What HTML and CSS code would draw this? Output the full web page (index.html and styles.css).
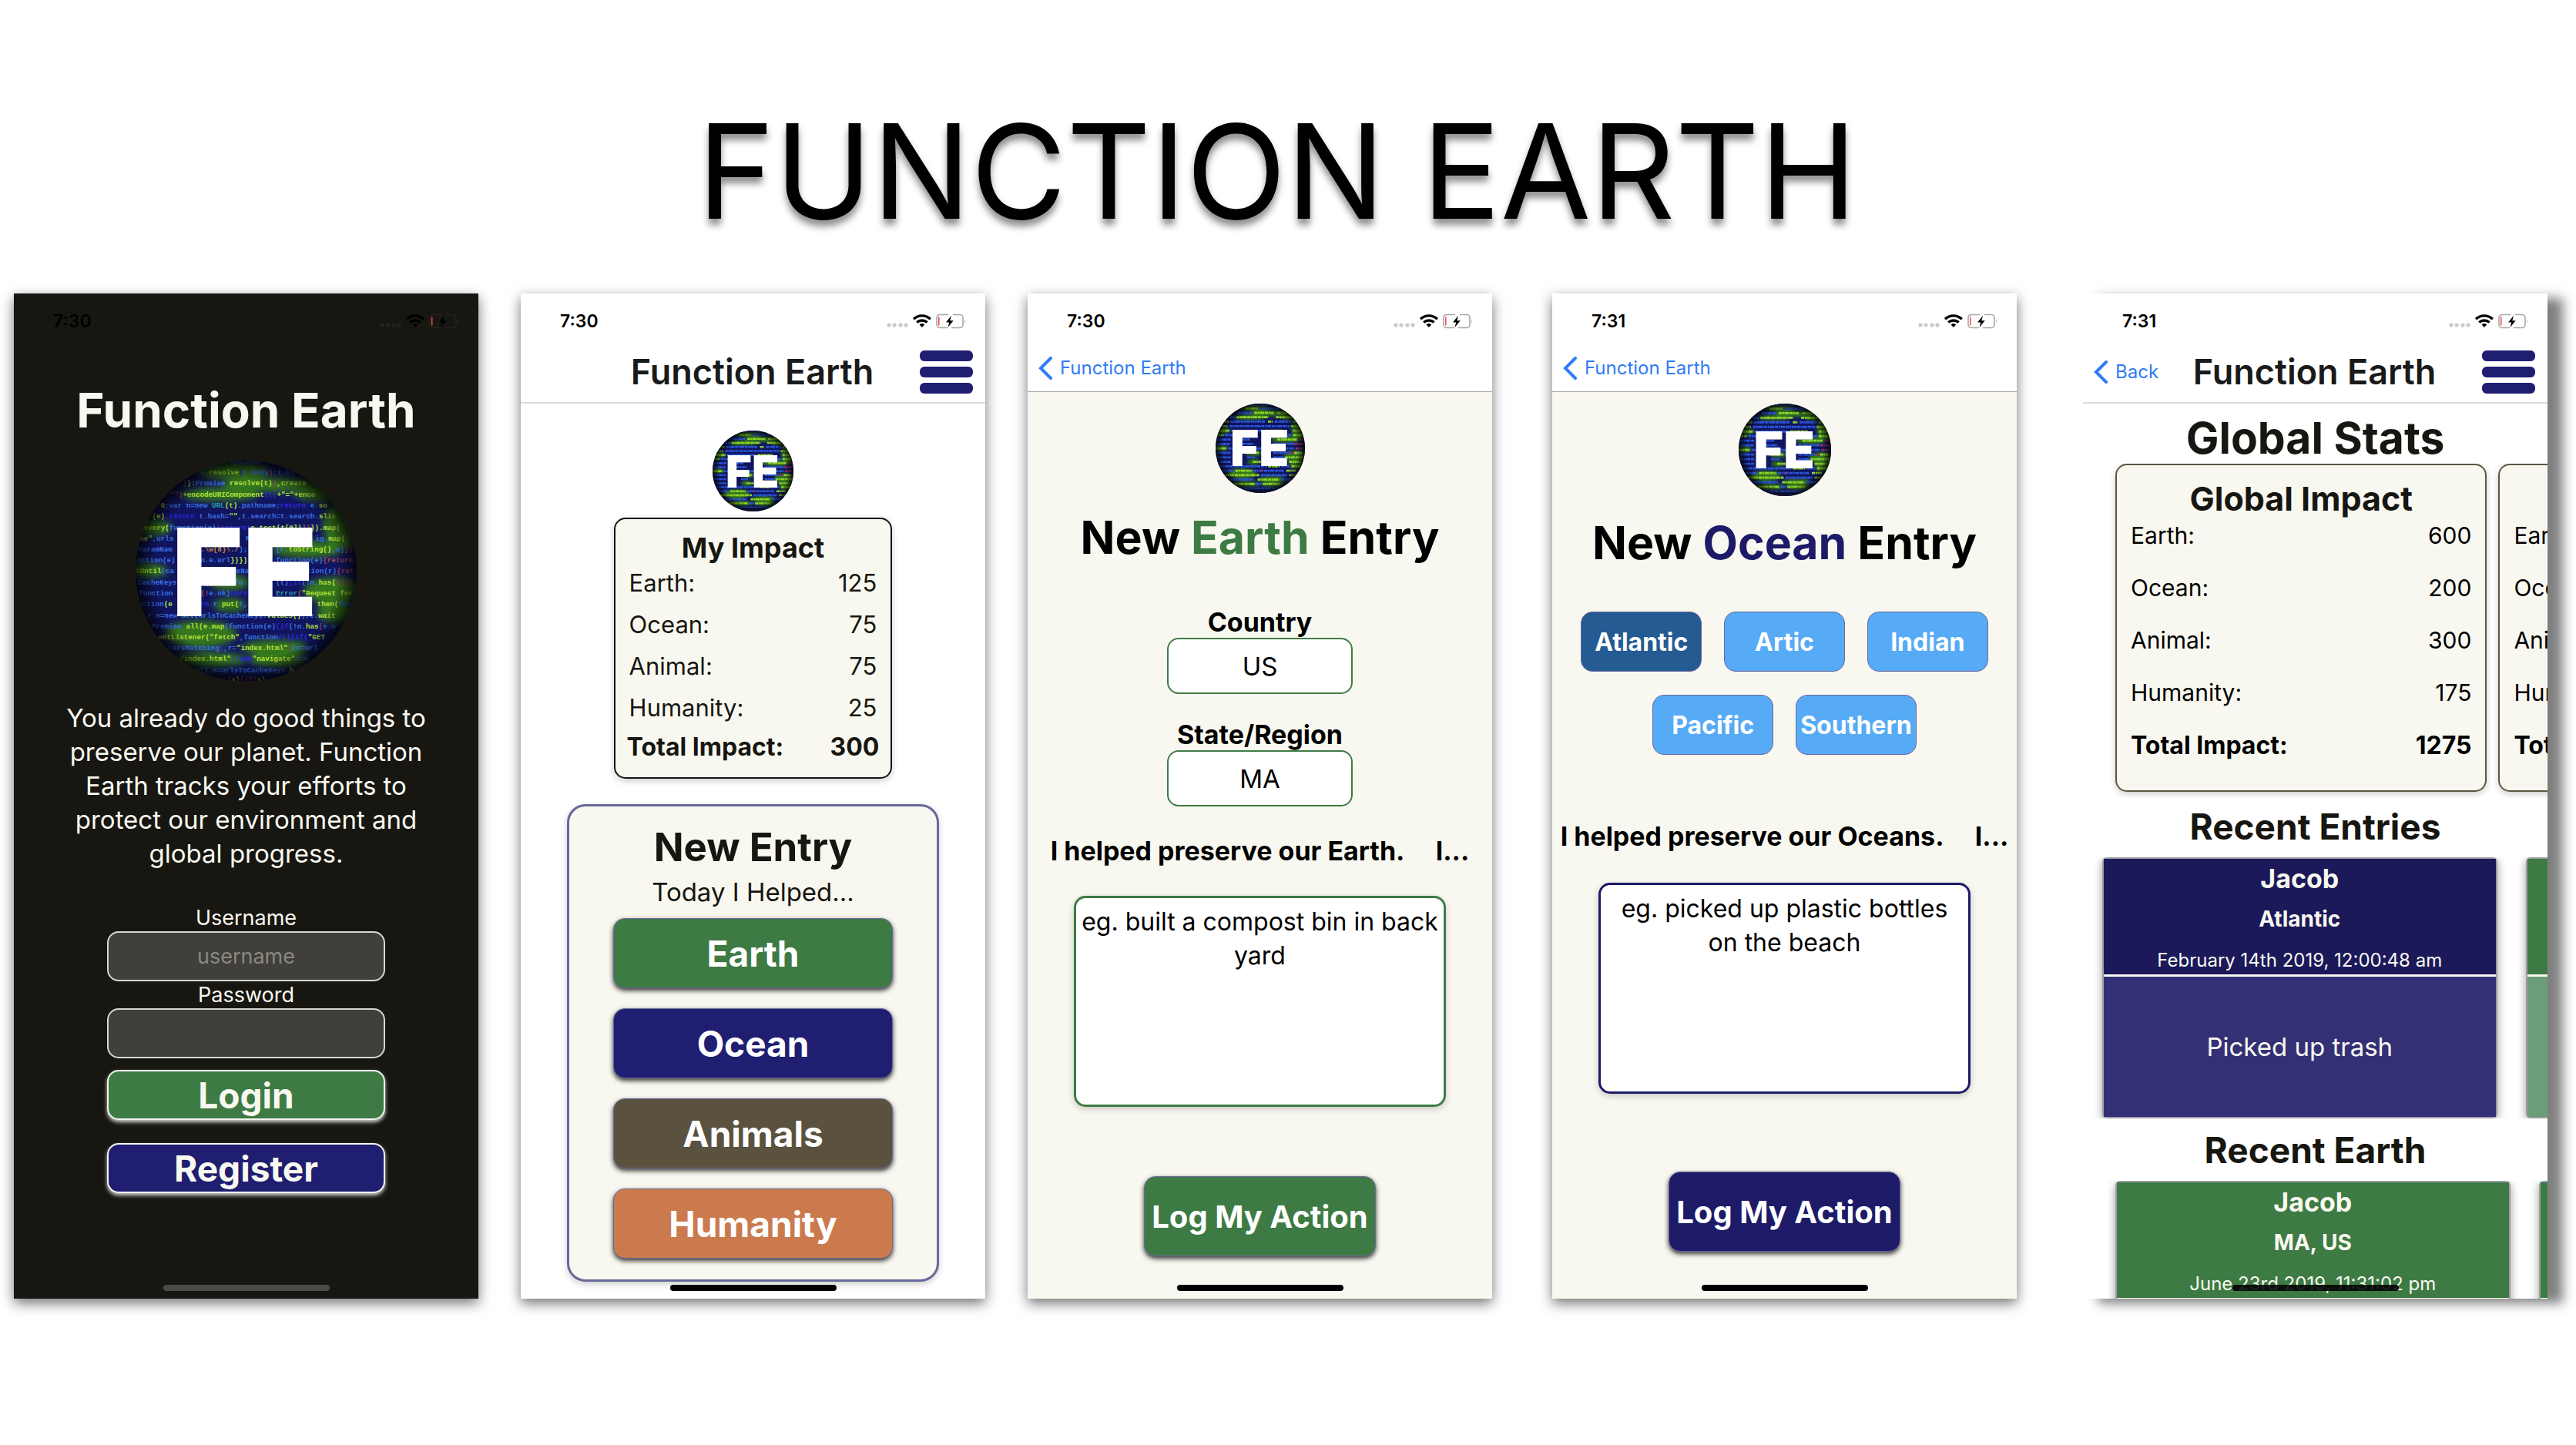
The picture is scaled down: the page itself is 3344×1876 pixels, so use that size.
FILE: index.html
```html
<!DOCTYPE html>
<html lang="en">
<head>
<meta charset="utf-8">
<meta name="viewport" content="width=device-width, initial-scale=1">
<title>Function Earth</title>
<link rel="stylesheet" href="styles.css">
</head>
<body>
<svg class="sprite" aria-hidden="true">
  <defs>
    <radialGradient id="rim" cx="50%" cy="50%" r="50%">
      <stop offset="0.82" stop-color="#000" stop-opacity="0"/>
      <stop offset="1" stop-color="#000" stop-opacity="0.8"/>
    </radialGradient>
    <clipPath id="disc"><circle cx="341" cy="341" r="341"/></clipPath>
    <filter id="soft" x="-30%" y="-30%" width="160%" height="160%"><feGaussianBlur stdDeviation="12"/></filter>
  </defs>
  <symbol id="globe" viewBox="0 0 682 682">
    <g clip-path="url(#disc)">
      <rect width="682" height="682" fill="#11155f"/>
      <g fill="#34771a" filter="url(#soft)">
        <ellipse cx="300" cy="32" rx="110" ry="27"/>
        <ellipse cx="420" cy="74" rx="150" ry="23"/>
        <ellipse cx="260" cy="104" rx="120" ry="21"/>
        <ellipse cx="570" cy="100" rx="80" ry="25"/>
        <ellipse cx="640" cy="200" rx="60" ry="74"/>
        <ellipse cx="50" cy="206" rx="60" ry="25"/>
        <ellipse cx="530" cy="273" rx="110" ry="27"/>
        <ellipse cx="30" cy="339" rx="70" ry="21"/>
        <ellipse cx="610" cy="402" rx="90" ry="42"/>
        <ellipse cx="620" cy="466" rx="60" ry="36"/>
        <ellipse cx="290" cy="376" rx="60" ry="25"/>
        <ellipse cx="290" cy="445" rx="50" ry="21"/>
        <ellipse cx="200" cy="535" rx="110" ry="42"/>
        <ellipse cx="430" cy="577" rx="100" ry="25"/>
        <ellipse cx="230" cy="614" rx="110" ry="23"/>
        <ellipse cx="440" cy="614" rx="90" ry="23"/>
      </g>
    </g>
  </symbol>
  <symbol id="rows" viewBox="0 0 682 682">
    <g clip-path="url(#disc)" fill="none" stroke-width="16" stroke-dasharray="24 4 12 3 33 5">
      <path stroke="#8fd42c" d="M228 36h95M295 70h150M470 70h90M160 104h245M460 104h120M60 138h40M400 138h35M590 138h60M51 172h40M575 172h70M25 206h85M380 206h130M590 206h80M12 240h50M590 240h70M470 274h150M0 342h85M230 376h100M600 376h60M530 410h140M285 444h60M560 444h90M400 478h90M580 478h80M150 512h130M540 512h80M66 546h270M560 546h60M320 580h165M140 614h160M360 614h130M500 648h20"/>
      <path stroke="#2a55d6" d="M250 8h180M330 36h160M170 70h110M100 104h50M110 138h270M450 138h130M105 172h460M120 206h250M70 240h110M510 240h70M10 274h110M200 274h60M4 308h110M200 308h90M440 308h160M95 342h60M280 342h100M480 342h120M8 376h110M340 376h60M440 376h130M10 410h110M240 410h60M440 410h90M8 444h110M420 444h110M24 478h370M500 478h60M50 512h90M290 512h230M345 546h200M90 580h200M500 580h90M310 614h40M185 648h300M240 676h160"/>
      <path stroke="#8e2f58" d="M640 274h36M600 308h80M610 342h60M570 376h24M205 240h18M340 512h16M300 676h40"/>
    </g>
    <circle cx="341" cy="341" r="341" fill="url(#rim)"/>
  </symbol>
  <symbol id="indicators" viewBox="0 0 104 20">
    <g class="dim">
      <circle cx="3" cy="15" r="2.6"/><circle cx="10" cy="15" r="2.6"/><circle cx="18" cy="15" r="2.6"/><circle cx="25" cy="15" r="2.6"/>
    </g>
    <g fill="none" stroke="currentColor" stroke-width="3.4">
      <path d="M35 7.200a16 16 0 0 1 21.800 0"/>
      <path d="M39.200 11.600a10 10 0 0 1 13.400 0"/>
    </g>
    <path d="M45.900 18l-3.300-3.600a5 5 0 0 1 6.600 0z" fill="currentColor"/>
    <path class="shell" d="M80 1.500H69a4 4 0 0 0-4 4v9a4 4 0 0 0 4 4h10M86 1.500h9a4 4 0 0 1 4 4v9a4 4 0 0 1-4 4H84"/>
    <path class="dim" d="M101 7.500a3 3 0 0 1 0 5z"/>
    <rect x="67" y="4.500" width="1.500" height="11" fill="#f0483e"/>
    <path d="M84 2.800l-7 8.700h4.200l-1.700 6.500 7.200-8.800h-4.400z" fill="currentColor"/>
  </symbol>
  <symbol id="chevron" viewBox="0 0 18 30">
    <path d="M16 2L3 15l13 13" fill="none" stroke="currentColor" stroke-width="4" stroke-linecap="round" stroke-linejoin="miter"/>
  </symbol>
</svg>

<header class="banner"><h1>FUNCTION EARTH</h1></header>

<main class="gallery">
  <section class="screen screen-login">
    <div class="status"><span>7:30</span><svg class="indicators"><use href="#indicators"/></svg></div>
    <h2 class="login-title">Function Earth</h2>
    <svg class="logo logo-large" viewBox="0 0 682 682" role="img" aria-label="Function Earth logo">
      <use href="#globe"/>
      <g class="code" clip-path="url(#disc)">
        <text x="290" y="10"><tspan class="b">!pathna</tspan></text>
        <text x="200" y="43"><tspan class="b">e.</tspan><tspan class="g">resolve</tspan><tspan class="d">(</tspan><tspan class="b">t.body</tspan><tspan class="r">)</tspan><tspan class="b">:t.bl</tspan></text>
        <text x="145" y="77"><tspan class="r">}</tspan><tspan class="g">):</tspan><tspan class="b">Promise </tspan><tspan class="g">resolve(t)</tspan><tspan class="r">}</tspan><tspan class="g">,create</tspan></text>
        <text x="106" y="111"><tspan class="r">"")</tspan><tspan class="g">+encodeURIComponent</tspan><tspan class="d">(t)</tspan><tspan class="g">+"="+enco</tspan></text>
        <text x="77" y="145"><tspan class="g">0</tspan><tspan class="b">;var n=new </tspan><tspan class="t">URL</tspan><tspan class="g">(t)</tspan><tspan class="b">.pathname;</tspan><tspan class="d">return</tspan><tspan class="b"> e.</tspan><tspan class="g">so</tspan></text>
        <text x="51" y="179"><tspan class="g">(e)</tspan><tspan class="d">;return </tspan><tspan class="b">t.hash=</tspan><tspan class="g">""</tspan><tspan class="b">,t.search=t.search.</tspan><tspan class="g">slic</tspan></text>
        <text x="25" y="213"><tspan class="g">every(</tspan><tspan class="b">function(e)</tspan><tspan class="d">{return!</tspan><tspan class="g">e.test(t[0])</tspan><tspan class="r">})</tspan><tspan class="g">}).map(</tspan></text>
        <text x="12" y="247"><tspan class="g">me"</tspan><tspan class="b">,urls</tspan></text>
        <text x="340" y="247"><tspan class="b">M</tspan></text>
        <text x="555" y="247"><tspan class="b">ig.</tspan><tspan class="g">map(</tspan><tspan class="r">f</tspan></text>
        <text x="8" y="281"><tspan class="b">ParamNam</tspan></text>
        <text x="200" y="281"><tspan class="o">.\w{8}\./</tspan><tspan class="b">);</tspan></text>
        <text x="433" y="281"><tspan class="b">[r.</tspan><tspan class="g">toString()</tspan><tspan class="b">,a]</tspan><tspan class="r">})</tspan></text>
        <text x="4" y="314"><tspan class="b">nction(e)</tspan></text>
        <text x="200" y="314"><tspan class="b">n.e.url</tspan><tspan class="g">})})</tspan></text>
        <text x="433" y="314"><tspan class="b">function(e)</tspan><tspan class="r">{return</tspan></text>
        <text x="0" y="348"><tspan class="g">tUntil</tspan><tspan class="b">(ca</tspan></text>
        <text x="284" y="348"><tspan class="b">cheNa</tspan></text>
        <text x="515" y="348"><tspan class="b">ction(r)</tspan><tspan class="r">{ret</tspan></text>
        <text x="8" y="382"><tspan class="b">CacheKeys</tspan></text>
        <text x="200" y="382"><tspan class="g">s().map</tspan><tspan class="b">(fu</tspan></text>
        <text x="433" y="382"><tspan class="b">(t)</tspan><tspan class="d">{if</tspan><tspan class="b">(!n.</tspan><tspan class="g">has(</tspan><tspan class="r">t)){</tspan></text>
        <text x="10" y="416"><tspan class="b">function</tspan></text>
        <text x="200" y="416"><tspan class="r">(!</tspan><tspan class="b">e.ok)</tspan><tspan class="d">thro</tspan></text>
        <text x="433" y="416"><tspan class="t">Error</tspan><tspan class="r">(</tspan><tspan class="g">"Request for</tspan></text>
        <text x="8" y="450"><tspan class="b">nction</tspan><tspan class="g">(e</tspan></text>
        <text x="200" y="450"><tspan class="d">rn </tspan><tspan class="b">r.</tspan><tspan class="g">put(</tspan><tspan class="b">t,</tspan></text>
        <text x="560" y="450"><tspan class="g">then(</tspan><tspan class="b">fun</tspan></text>
        <text x="36" y="484"><tspan class="b">r n=new </tspan><tspan class="t">Set</tspan><tspan class="b">(urlsToCacheKeys.</tspan><tspan class="g">values()</tspan><tspan class="b">);e.</tspan><tspan class="g">wait</tspan></text>
        <text x="50" y="518"><tspan class="b">Promise.</tspan><tspan class="g">all(e.map</tspan><tspan class="b">(function(e)</tspan><tspan class="d">{if</tspan><tspan class="b">(!n.</tspan><tspan class="g">has</tspan><tspan class="r">(</tspan><tspan class="b">e.u</tspan></text>
        <text x="70" y="552"><tspan class="g">entListener("fetch"</tspan><tspan class="b">,function</tspan><tspan class="d">(t){if(</tspan><tspan class="g">"GET</tspan></text>
        <text x="100" y="585"><tspan class="b">tersMatching</tspan><tspan class="d">)</tspan><tspan class="b">,r=</tspan><tspan class="g">"index.html"</tspan><tspan class="r">;</tspan><tspan class="b">(e=url</tspan></text>
        <text x="136" y="619"><tspan class="g">/index.html"</tspan><tspan class="d">;!e&amp;&amp;</tspan><tspan class="g">"navigate"</tspan><tspan class="b">===</tspan></text>
        <text x="185" y="653"><tspan class="t">a(),</tspan><tspan class="b">e=urlsToCacheKeys.</tspan><tspan class="g">h</tspan></text>
        <text x="282" y="681"><tspan class="r">(</tspan><tspan class="g">a)</tspan><tspan class="r">{if(</tspan><tspan class="g">a)</tspan></text>
      </g>
      <circle cx="341" cy="341" r="341" fill="url(#rim)"/>
      <text class="monogram" x="336" y="479" text-anchor="middle">FE</text>
    </svg>
    <p class="intro">You already do good things to preserve our planet. Function Earth tracks your efforts to protect our environment and global progress.</p>
    <form class="login-form">
      <label for="username">Username</label>
      <input id="username" type="text" placeholder="username">
      <label for="password">Password</label>
      <input id="password" type="password">
      <button type="button" class="btn-login">Login</button>
      <button type="button" class="btn-register">Register</button>
    </form>
    <div class="home-bar"></div>
  </section>

  <section class="screen screen-home">
    <div class="status"><span>7:30</span><svg class="indicators"><use href="#indicators"/></svg></div>
    <nav class="nav">
      <h2>Function Earth</h2>
      <button type="button" class="menu" aria-label="Menu"><i></i><i></i><i></i></button>
    </nav>
    <svg class="logo logo-small" viewBox="0 0 682 682" role="img" aria-label="Function Earth logo"><use href="#globe"/><use href="#rows"/><text class="monogram" x="336" y="479" text-anchor="middle">FE</text></svg>
    <div class="impact">
      <h3>My Impact</h3>
      <table>
        <tr><th>Earth:</th><td>125</td></tr>
        <tr><th>Ocean:</th><td>75</td></tr>
        <tr><th>Animal:</th><td>75</td></tr>
        <tr><th>Humanity:</th><td>25</td></tr>
        <tr class="total"><th>Total Impact:</th><td>300</td></tr>
      </table>
    </div>
    <div class="new-entry">
      <h3>New Entry</h3>
      <p>Today I Helped...</p>
      <div class="causes">
        <button type="button" class="earth">Earth</button>
        <button type="button" class="ocean">Ocean</button>
        <button type="button" class="animals">Animals</button>
        <button type="button" class="humanity">Humanity</button>
      </div>
    </div>
    <div class="home-bar"></div>
  </section>

  <section class="screen screen-entry entry-earth">
    <div class="status"><span>7:30</span><svg class="indicators"><use href="#indicators"/></svg></div>
    <nav class="nav-back"><a href="#"><svg class="chevron"><use href="#chevron"/></svg>Function Earth</a></nav>
    <svg class="logo logo-earth" viewBox="0 0 682 682" role="img" aria-label="Function Earth logo"><use href="#globe"/><use href="#rows"/><text class="monogram" x="336" y="479" text-anchor="middle">FE</text></svg>
    <h2>New <em>Earth</em> Entry</h2>
    <form>
      <label class="place" for="country">Country</label>
      <input id="country" type="text" value="US">
      <label class="place" for="region">State/Region</label>
      <input id="region" type="text" value="MA">
      <label class="prompt" for="earth-action">I helped preserve our Earth.&nbsp;&nbsp;&nbsp;&nbsp; I...</label>
      <textarea id="earth-action">eg. built a compost bin in back yard</textarea>
      <button type="button" class="log">Log My Action</button>
    </form>
    <div class="home-bar"></div>
  </section>

  <section class="screen screen-entry entry-ocean">
    <div class="status"><span>7:31</span><svg class="indicators"><use href="#indicators"/></svg></div>
    <nav class="nav-back"><a href="#"><svg class="chevron"><use href="#chevron"/></svg>Function Earth</a></nav>
    <svg class="logo logo-ocean" viewBox="0 0 682 682" role="img" aria-label="Function Earth logo"><use href="#globe"/><use href="#rows"/><text class="monogram" x="336" y="479" text-anchor="middle">FE</text></svg>
    <h2>New <em>Ocean</em> Entry</h2>
    <form>
      <div class="oceans">
        <button type="button" aria-pressed="true">Atlantic</button>
        <button type="button">Artic</button>
        <button type="button">Indian</button>
        <button type="button">Pacific</button>
        <button type="button">Southern</button>
      </div>
      <label class="prompt" for="ocean-action">I helped preserve our Oceans.&nbsp;&nbsp;&nbsp;&nbsp; I...</label>
      <textarea id="ocean-action">eg. picked up plastic bottles on the beach</textarea>
      <button type="button" class="log">Log My Action</button>
    </form>
    <div class="home-bar"></div>
  </section>

  <section class="screen screen-stats">
    <div class="status"><span>7:31</span><svg class="indicators"><use href="#indicators"/></svg></div>
    <nav class="nav">
      <a href="#"><svg class="chevron"><use href="#chevron"/></svg>Back</a>
      <h2>Function Earth</h2>
      <button type="button" class="menu" aria-label="Menu"><i></i><i></i><i></i></button>
    </nav>
    <h2 class="stats-title">Global Stats</h2>
    <div class="strip strip-impact">
      <div class="impact">
        <h3>Global Impact</h3>
        <table>
          <tr><th>Earth:</th><td>600</td></tr>
          <tr><th>Ocean:</th><td>200</td></tr>
          <tr><th>Animal:</th><td>300</td></tr>
          <tr><th>Humanity:</th><td>175</td></tr>
          <tr class="total"><th>Total Impact:</th><td>1275</td></tr>
        </table>
      </div>
      <div class="impact impact-next">
        <table>
          <tr><th>Earth:</th></tr>
          <tr><th>Ocean:</th></tr>
          <tr><th>Animal:</th></tr>
          <tr><th>Humanity:</th></tr>
          <tr class="total"><th>Total Impact:</th></tr>
        </table>
      </div>
    </div>
    <h2 class="recent">Recent Entries</h2>
    <div class="strip strip-entries">
      <article class="card card-ocean">
        <header><h3>Jacob</h3><h4>Atlantic</h4><time>February 14th 2019, 12:00:48 am</time></header>
        <p>Picked up trash</p>
      </article>
      <article class="card card-earth"><header></header><p></p></article>
    </div>
    <h2 class="recent recent-earth">Recent Earth</h2>
    <div class="strip strip-earth">
      <article class="card card-earth">
        <header><h3>Jacob</h3><h4>MA, US</h4><time>June 23rd 2019, 11:31:02 pm</time></header>
        <p></p>
      </article>
      <article class="card card-earth"><header></header><p></p></article>
    </div>
    <div class="home-bar"></div>
  </section>
</main>
</body>
</html>
```
FILE: styles.css
```css
:root {
  --cream: #f9f8f0;
  --ink: #171611;
  --green: #3e7b44;
  --navy: #201e70;
  --deep: #1d1b68;
  --lilac: #67689a;
  --link: #307cf6;
  --dim: #c9c9c9;
  --shell: #a8a8a8;
}

* { box-sizing: border-box; }

body {
  margin: 0;
  background: #fff;
  font-family: Inter, "Liberation Sans", sans-serif;
  color: #000;
}

h1, h2, h3, h4, p { margin: 0; }
button, input, textarea { font-family: inherit; color: inherit; margin: 0; padding: 0; }
.sprite { position: absolute; width: 0; height: 0; }

/* Banner */
.banner { padding: 112px 0 49px; text-align: center; }
.banner h1 {
  font-size: 170px;
  line-height: 220px;
  font-weight: 400;
  padding-right: 28px;
  text-shadow: 0 8px 10px rgba(0, 0, 0, 0.45);
}

/* Screens */
.gallery { display: flex; align-items: flex-start; gap: 55px; padding: 0 37px 60px 18px; }
.screen {
  position: relative;
  flex: 1 1 0;
  aspect-ratio: 603 / 1305;
  overflow: hidden;
  display: flex;
  flex-direction: column;
  align-items: center;
  background: #fff;
  box-shadow: 0 6px 16px rgba(0, 0, 0, 0.55);
}
.screen > * { flex-shrink: 0; }
.entry-ocean { margin-left: 23px; }
.screen-stats { margin-left: 31px; box-shadow: 20px 6px 14px rgba(0, 0, 0, 0.5); }

.status {
  align-self: stretch;
  height: 72px;
  padding: 0 24px 0 51px;
  display: flex;
  align-items: center;
  justify-content: space-between;
  font-size: 23px;
  font-weight: 600;
}
.indicators { width: 104px; height: 20px; }
.dim { fill: var(--dim); }
.shell { fill: none; stroke: var(--shell); stroke-width: 1.6; }

.home-bar {
  position: absolute;
  left: 50%;
  bottom: 10px;
  width: 216px;
  height: 8px;
  margin-left: -108px;
  border-radius: 4px;
  background: #000;
}

/* Logo */
.code { font: bold 22px "Liberation Mono", monospace; white-space: pre; }
.code .g { fill: #b4e23c; }
.code .b { fill: #3b70e6; }
.code .d { fill: #2c28d8; }
.code .t { fill: #2b9bb0; }
.code .r { fill: #a2455c; }
.code .o { fill: #c98440; }
.monogram { font: 900 376px Inter, sans-serif; fill: #fff; }
.logo-large { width: 287px; height: 287px; margin-top: 29px; }
.logo-small { width: 105px; height: 105px; margin-top: 35px; }
.logo-earth { width: 116px; height: 116px; margin-top: 15px; }
.logo-ocean { width: 120px; height: 120px; margin-top: 15px; }

/* Navigation */
.nav {
  align-self: stretch;
  height: 71px;
  padding: 0 16px 10px 14px;
  border-bottom: 2px solid #dcdcdc;
  display: grid;
  grid-template-columns: 1fr auto 1fr;
  align-items: center;
}
.nav h2 { grid-column: 2; font-size: 45px; line-height: 59px; font-weight: 600; color: #1a1a1a; }
.nav a, .nav-back a {
  display: flex;
  align-items: center;
  gap: 10px;
  color: var(--link);
  text-decoration: none;
  font-size: 24px;
}
.chevron { width: 18px; height: 30px; }
.menu {
  grid-column: 3;
  justify-self: end;
  width: 69px;
  border: 0;
  background: none;
  display: flex;
  flex-direction: column;
  gap: 7px;
}
.menu i { height: 14px; border-radius: 6px; background: var(--navy); }
.nav-back {
  align-self: stretch;
  height: 56px;
  padding: 0 14px 6px;
  border-bottom: 1px solid #a7a7aa;
  background: #fff;
  display: flex;
}

/* Login */
.screen-login { --dim: #24231f; --shell: #24231f; background: var(--ink); color: var(--cream); }
.screen-login .status { color: #000; }
.screen-login .home-bar { background: #4b4a48; }
.login-title { margin-top: 44px; font-size: 62px; line-height: 72px; font-weight: 700; }
.intro { width: 80%; margin-top: 25px; font-size: 33px; line-height: 44px; text-align: center; }
.login-form { width: 60%; margin-top: 44px; display: flex; flex-direction: column; text-align: center; }
.login-form label { font-size: 27px; line-height: 35px; }
.login-form input {
  height: 65px;
  border: 2px solid #d8d7cf;
  border-radius: 15px;
  background: #403f39;
  font-size: 27px;
  text-align: center;
}
.login-form input::placeholder { color: #8a8983; opacity: 1; }
.login-form button {
  height: 65px;
  border: 2px solid #f4f3ee;
  border-radius: 15px;
  box-shadow: 0 3px 5px rgba(255, 255, 255, 0.8);
  font-size: 46px;
  font-weight: 700;
  line-height: 56px;
}
.btn-login { margin-top: 15px; background: var(--green); }
.login-form .btn-register { margin-top: 30px; background: var(--navy); }

/* Impact tables */
.impact {
  border: 2px solid #171611;
  border-radius: 15px;
  background: var(--cream);
  box-shadow: 0 3px 8px rgba(0, 0, 0, 0.2);
}
.impact h3 { text-align: center; font-weight: 700; color: var(--ink); }
.impact table { width: 100%; border-collapse: collapse; }
.impact th, .impact td { padding: 0; font-weight: 400; text-align: left; white-space: nowrap; }
.impact td { text-align: right; }
.impact .total th, .impact .total td { font-size: 32px; font-weight: 700; }

.screen-home .impact { width: 60%; margin-top: 8px; padding: 19px 15px 16px; color: var(--ink); font-size: 31px; }
.screen-home .impact h3 { font-size: 36px; line-height: 36px; }
.screen-home .impact tr { height: 54px; }
.screen-home .impact .total { height: 48px; }
.screen-home .impact th { padding-left: 3px; }
.screen-home .impact td { padding-right: 3px; }
.screen-home .impact .total th, .screen-home .impact .total td { padding: 0; }

.new-entry {
  width: 80%;
  margin-top: 33px;
  padding: 23px 57px 27px;
  border: 3px solid var(--lilac);
  border-radius: 24px;
  background: var(--cream);
  box-shadow: 0 3px 8px rgba(0, 0, 0, 0.2);
  text-align: center;
  color: var(--ink);
}
.new-entry h3 { font-size: 51px; line-height: 60px; font-weight: 700; }
.new-entry p { margin: 8px 0 14px; font-size: 33px; line-height: 40px; }
.causes { display: flex; flex-direction: column; gap: 26px; }
.causes button, .log {
  height: 91px;
  border: 1px solid var(--lilac);
  border-radius: 15px;
  box-shadow: 0 3px 6px rgba(0, 0, 0, 0.8);
  color: #fff;
  font-size: 46px;
  font-weight: 700;
}
.earth { background: var(--green); }
.ocean { background: var(--navy); }
.animals { background: #5a523f; }
.humanity { background: #cb7a4e; }

/* Entry forms */
.screen-entry { --accent: var(--green); background: var(--cream); }
.screen-entry .status { background: #fff; }
.entry-ocean { --accent: var(--deep); }
.screen-entry h2 { margin-top: 23px; font-size: 59px; line-height: 70px; font-weight: 700; }
.screen-entry em { font-style: normal; color: var(--accent); }
.screen-entry form { align-self: stretch; display: flex; flex-direction: column; align-items: center; }
.place { margin-top: 32px; font-size: 34px; line-height: 41px; font-weight: 700; }
.place:first-child { margin-top: 54px; }
.screen-entry input {
  width: 40%;
  height: 73px;
  border: 2px solid var(--accent);
  border-radius: 15px;
  background: #fff;
  font-size: 33px;
  text-align: center;
}
.prompt { margin-top: 38px; font-size: 34px; line-height: 40px; font-weight: 700; white-space: nowrap; }
.screen-entry textarea {
  display: block;
  width: 80%;
  height: 274px;
  margin-top: 38px;
  padding: 9px 4px;
  border: 3px solid var(--accent);
  border-radius: 15px;
  background: #fff;
  box-shadow: 0 3px 8px rgba(0, 0, 0, 0.2);
  font-size: 32px;
  line-height: 44px;
  text-align: center;
  resize: none;
  overflow: hidden;
}
.log { width: 50%; height: 104px; margin-top: 90px; background: var(--accent); font-size: 40px; }

.entry-ocean h2 { margin-top: 26px; }
.oceans { align-self: stretch; margin-top: 54px; display: flex; flex-wrap: wrap; justify-content: center; gap: 30px 29px; }
.oceans button {
  width: 26%;
  height: 78px;
  border: 1px solid var(--lilac);
  border-radius: 15px;
  background: #57abf6;
  color: #fff;
  font-size: 32px;
  font-weight: 700;
}
.oceans button[aria-pressed="true"] { background: #235b92; }
.entry-ocean .prompt { margin-top: 86px; }
.entry-ocean textarea { margin-top: 40px; }
.entry-ocean .log { margin-top: 101px; }

/* Stats */
.stats-title { margin-top: 11px; font-size: 57px; line-height: 67px; font-weight: 700; color: var(--ink); }
.strip { align-self: stretch; display: flex; overflow: hidden; }
.strip > * { flex-shrink: 0; }
.strip-impact { gap: 15px; padding-bottom: 8px; }
.strip-impact > :first-child { margin-left: 42px; }
.strip .impact { width: 80%; padding: 29px 18px 25px; border-color: #5d5642; font-size: 30px; }
.strip .impact h3 { font-size: 43px; line-height: 28px; }
.strip .impact tr { height: 68px; }
.strip .impact-next { padding-top: 57px; }
.recent { margin-top: 9px; font-size: 46px; line-height: 56px; font-weight: 700; color: var(--ink); }
.recent-earth { margin-top: 13px; }
.strip-entries, .strip-earth { margin-top: 12px; gap: 37px; }
.strip-entries > :first-child { margin-left: 25px; }
.strip-earth > :first-child { margin-left: 42px; }
.card {
  width: 85%;
  min-height: 339px;
  display: flex;
  flex-direction: column;
  border: 2px solid #9d9da3;
  border-radius: 6px;
  box-shadow: 0 3px 12px rgba(0, 0, 0, 0.4);
  color: var(--cream);
  text-align: center;
}
.card header { min-height: 153px; border-bottom: 3px solid var(--cream); }
.card h3 { font-size: 34px; line-height: 52px; font-weight: 700; }
.card h4 { font-size: 28px; line-height: 52px; font-weight: 700; }
.card time { display: block; margin-top: 10px; font-size: 24px; line-height: 36px; }
.card p { flex: 1; display: flex; align-items: center; justify-content: center; font-size: 33px; }
.card-ocean header { background: #1b195a; }
.card-ocean p { background: #343076; }
.card-earth header { background: var(--green); }
.card-earth p { background: #6b9e78; }
.screen-stats .home-bar { background: rgba(0, 0, 0, 0.88); }
```
